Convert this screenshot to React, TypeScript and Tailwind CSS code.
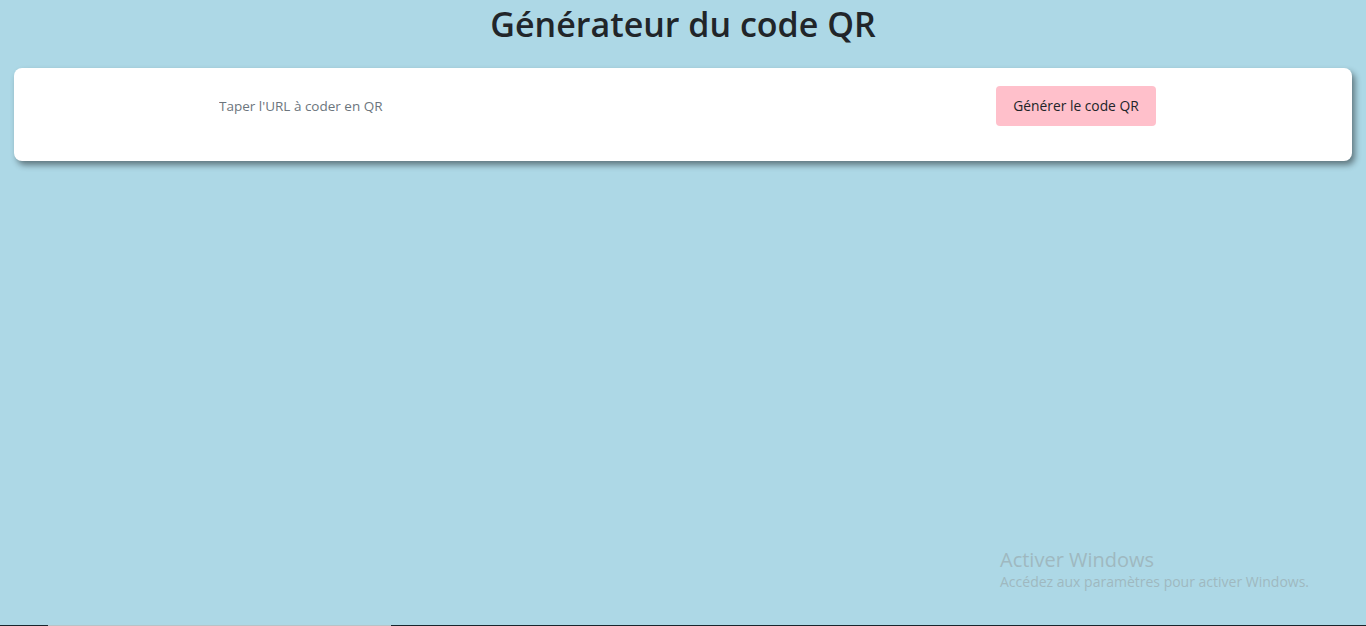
export default function App() {
  return (
    <div className="flex h-screen flex-col bg-[#add8e6] font-['Open_Sans',sans-serif]">
      <h1 className="mt-[2px] text-center text-[34px] leading-[44px] font-semibold text-[#212529]">
        Générateur du code QR
      </h1>
      <div className="mx-[14px] mt-[22px] flex h-[93px] items-start rounded-lg bg-white pt-[18px] shadow-[3px_4px_6px_rgba(0,0,0,0.45)]">
        <input
          type="text"
          placeholder="Taper l'URL à coder en QR"
          className="ml-[193px] h-[40px] w-[600px] px-3 text-[13.5px] text-gray-700 outline-none placeholder:text-[#6c757d]"
        />
        <button className="ml-[189px] h-[40px] w-[160px] rounded bg-[#ffc0cb] text-[13.8px] text-[#212529]">
          Générer le code QR
        </button>
      </div>
      <div className="flex-1" />
      <div className="relative">
        <div className="pointer-events-none absolute bottom-[33px] left-[1000px] text-[#9fb8c0]">
          <p className="text-[20px] leading-[24px]">Activer Windows</p>
          <p className="text-[14px] leading-[20px]">Accédez aux paramètres pour activer Windows.</p>
        </div>
      </div>
      <div className="flex h-px">
        <div className="w-[48px] bg-[#1a252c]" />
        <div className="w-[343px] bg-[#b8c2c6]" />
        <div className="flex-1 bg-[#1a252c]" />
      </div>
    </div>
  );
}
